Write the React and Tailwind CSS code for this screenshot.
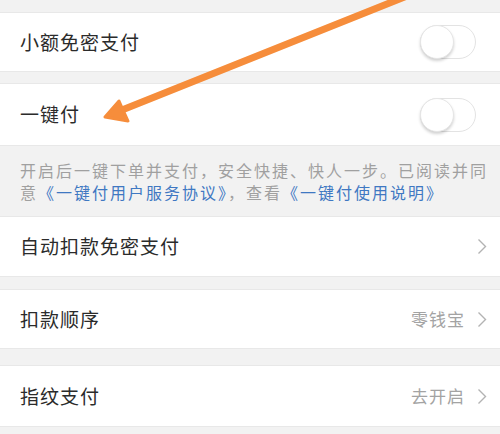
const font = { fontFamily: '"Noto Sans CJK SC", "Noto Sans", sans-serif' };

function Toggle() {
  return (
    <div className="relative h-[34px] w-[56px] rounded-full border border-[#e3e3e3] bg-white">
      <div className="absolute left-[-1px] top-[-1px] h-[34px] w-[34px] rounded-full border border-[#e6e6e6] bg-white shadow-[0_2px_3px_rgba(0,0,0,0.18)]" />
    </div>
  );
}

function Chevron() {
  return (
    <svg width="10" height="17" viewBox="0 0 10 17" fill="none">
      <polyline points="1.5,1.5 8.5,8.5 1.5,15.5" stroke="#b3b3b3" strokeWidth="1.4" />
    </svg>
  );
}

function SwitchRow({ title, className }) {
  return (
    <div className={`flex items-center justify-between border-y border-[#e8e8e8] bg-white pl-5 pr-[24px] ${className}`}>
      <span className="text-[19px] tracking-[1px] text-[#2b2b2b]">{title}</span>
      <Toggle />
    </div>
  );
}

function LinkRow({ title, value, className }) {
  return (
    <div className={`flex items-center justify-between border-y border-[#e8e8e8] bg-white pl-5 pr-[13px] ${className}`}>
      <span className="text-[19px] tracking-[1px] text-[#2b2b2b]">{title}</span>
      <div className="flex items-center gap-[12px]">
        {value && <span className="text-[17px] tracking-[1px] text-[#a3a3a3]">{value}</span>}
        <Chevron />
      </div>
    </div>
  );
}

export default function App() {
  return (
    <div className="relative h-[434px] w-[500px] overflow-hidden bg-[#f2f2f2]" style={font}>
      <div className="flex flex-col pt-[12px]">
        <SwitchRow title="小额免密支付" className="h-[60px]" />
        <SwitchRow title="一键付" className="mt-[11px] h-[63px]" />
        <div className="h-[70px] pl-5 pt-[13px] text-[16px] leading-[22px] tracking-[2px] text-[#a0a0a0]">
          <div className="whitespace-nowrap">开启后一键下单并支付，安全快捷、快人一步。已阅读并同</div>
          <div className="whitespace-nowrap">
            意<span className="text-[#3f78c2]">《一键付用户服务协议》</span>，查看
            <span className="text-[#3f78c2]">《一键付使用说明》</span>
          </div>
        </div>
        <LinkRow title="自动扣款免密支付" className="h-[61px]" />
        <LinkRow title="扣款顺序" value="零钱宝" className="mt-[12px] h-[60px]" />
        <LinkRow title="指纹支付" value="去开启" className="mt-[16px] h-[62px]" />
      </div>
      <svg className="pointer-events-none absolute left-0 top-0" width="500" height="434" viewBox="0 0 500 434">
        <line x1="412" y1="-6" x2="122" y2="110" stroke="#f68d3b" strokeWidth="7" strokeLinecap="round" />
        <polygon points="105,117 119,101 128,121" fill="#f68d3b" stroke="#f68d3b" strokeWidth="3" strokeLinejoin="round" />
      </svg>
    </div>
  );
}
